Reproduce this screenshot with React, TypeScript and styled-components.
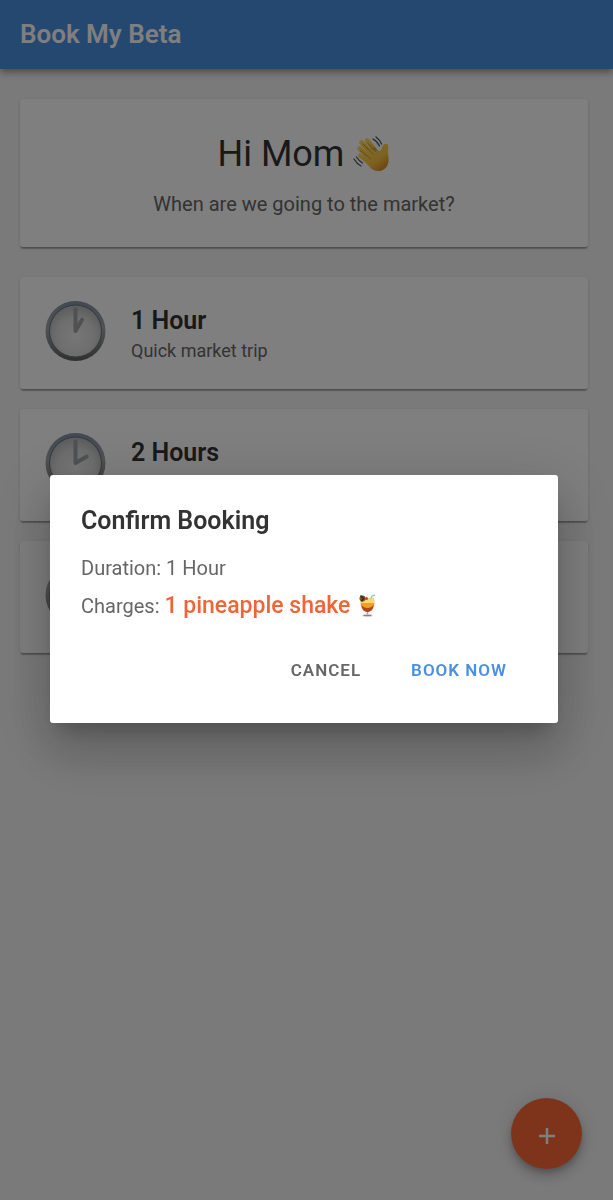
import React from "react";
import styled, { createGlobalStyle } from "styled-components";

const GlobalStyle = createGlobalStyle`
  * { box-sizing: border-box; }
  body {
    margin: 0;
    background: #f5f5f5;
    color: #333333;
    font-family: Roboto, "Liberation Sans", sans-serif;
  }
  h1, h2, h3, p, ul { margin: 0; padding: 0; }
`;

const Header = styled.header`
  position: relative;
  display: flex;
  align-items: center;
  height: 69px;
  padding: 0 20px 2px;
  background: #4a90e2;
  color: #ffffff;
  box-shadow: 0 3px 5px -1px rgba(0, 0, 0, 0.2), 0 5px 6px rgba(0, 0, 0, 0.14), 0 1px 13px rgba(0, 0, 0, 0.12);
`;

const Brand = styled.h1`
  font-size: 26px;
  line-height: 30px;
  font-weight: 600;
`;

const Main = styled.main`
  display: flex;
  flex-direction: column;
  gap: 30px;
  padding: 30px 25px 30px 20px;
`;

const Card = styled.section`
  background: #ffffff;
  border-radius: 3px;
  box-shadow: 0 3px 1px -1px rgba(0, 0, 0, 0.2), 0 1px 1px rgba(0, 0, 0, 0.14), 0 1px 4px rgba(0, 0, 0, 0.12);
`;

const Welcome = styled(Card)`
  display: flex;
  flex-direction: column;
  align-items: center;
  gap: 10px;
  min-height: 148px;
  padding: 30px 30px 28px;
`;

const Greeting = styled.h2`
  display: flex;
  align-items: center;
  gap: 9px;
  font-size: 36px;
  line-height: 50px;
  font-weight: 400;
`;

const Question = styled.p`
  color: #666666;
  font-size: 20px;
  line-height: 30px;
`;

const Options = styled.ul`
  display: flex;
  flex-direction: column;
  gap: 20px;
  list-style: none;
`;

const Option = styled(Card).attrs({ as: "li" })`
  display: flex;
  align-items: center;
  gap: 25px;
  min-height: 112px;
  padding: 20px 25px 24px;
`;

const OptionText = styled.div`
  padding-top: 2px;
`;

const OptionTitle = styled.h3`
  min-height: 36px;
  font-size: 25px;
  line-height: 36px;
  font-weight: 600;
`;

const OptionNote = styled.p`
  min-height: 23px;
  color: #666666;
  font-size: 18px;
  line-height: 23px;
`;

const AddButton = styled.button`
  position: fixed;
  right: 31px;
  bottom: 31px;
  display: grid;
  place-items: center;
  width: 71px;
  height: 71px;
  padding: 5px 0 0;
  border: 0;
  border-radius: 50%;
  background: #fb6836;
  color: #ffffff;
  box-shadow: 0 4px 6px -1px rgba(0, 0, 0, 0.2), 0 8px 13px rgba(0, 0, 0, 0.14), 0 1px 23px rgba(0, 0, 0, 0.12);
`;

const Overlay = styled.div`
  position: fixed;
  inset: 0;
  display: flex;
  align-items: center;
  padding: 0 55px 2px 50px;
  background: rgba(0, 0, 0, 0.5);
`;

const Dialog = styled.div`
  flex: 1;
  padding: 30px 31px;
  border-radius: 3px;
  background: #ffffff;
  box-shadow: 0 14px 19px -9px rgba(0, 0, 0, 0.2), 0 31px 48px 4px rgba(0, 0, 0, 0.14),
    0 11px 59px 10px rgba(0, 0, 0, 0.12);
`;

const DialogTitle = styled.h2`
  margin-bottom: 12px;
  font-size: 25px;
  line-height: 32px;
  font-weight: 600;
`;

const DialogLine = styled.p`
  display: flex;
  align-items: center;
  color: #666666;
  font-size: 20px;
  line-height: 38px;
  white-space: pre;
`;

const Price = styled.strong`
  display: flex;
  align-items: center;
  color: #ee6538;
  font-size: 23px;
  font-weight: 500;
`;

const Actions = styled.div`
  display: flex;
  justify-content: flex-end;
  gap: 10px;
  margin-top: 22px;
`;

const Action = styled.button<{ $primary?: boolean }>`
  height: 46px;
  padding: 0 20px;
  border: 0;
  background: transparent;
  color: ${(p) => (p.$primary ? "#4a90e2" : "#666666")};
  font-family: inherit;
  font-size: 17px;
  font-weight: 600;
  letter-spacing: 1px;
  text-transform: uppercase;
`;

function Clock({ hour }: { hour: number }) {
  const angle = (hour * Math.PI) / 6;
  const x = 30.5 + 13 * Math.sin(angle);
  const y = 31 - 13 * Math.cos(angle);
  return (
    <svg width="61" height="62" viewBox="0 0 61 62" aria-hidden="true">
      <defs>
        <linearGradient id={`rim${hour}`} x1="0" y1="0" x2="0" y2="1">
          <stop offset="0" stopColor="#8593a8" />
          <stop offset=".45" stopColor="#a2a4a8" />
          <stop offset="1" stopColor="#606060" />
        </linearGradient>
        <radialGradient id={`face${hour}`} cx=".5" cy=".6" r=".6">
          <stop offset="0" stopColor="#eeeeee" />
          <stop offset=".6" stopColor="#dcdcdc" />
          <stop offset="1" stopColor="#b4b6b8" />
        </radialGradient>
      </defs>
      <circle cx="30.5" cy="31" r="30" fill={`url(#rim${hour})`} />
      <circle cx="30.5" cy="31" r="26" fill={`url(#face${hour})`} stroke="#66707e" strokeWidth="1" />
      <path
        d={`M30.5 9.500V31L${x} ${y}`}
        fill="none"
        stroke="#a0a2a4"
        strokeWidth="4"
        strokeLinecap="round"
        strokeLinejoin="round"
      />
    </svg>
  );
}

function Wave() {
  return (
    <svg width="37" height="37" viewBox="0 0 37 37" role="img" aria-label="Waving hand">
      <defs>
        <linearGradient id="skin" x1="0" y1="0" x2=".7" y2="1">
          <stop offset="0" stopColor="#ffd95e" />
          <stop offset=".65" stopColor="#fbc640" />
          <stop offset="1" stopColor="#d88d20" />
        </linearGradient>
      </defs>
      <g fill="none" stroke="url(#skin)" strokeLinecap="round">
        <path d="M14 4.500L23 16" strokeWidth="4.600" />
        <path d="M8.500 6.500L20 19" strokeWidth="4.800" />
        <path d="M6.500 12.500L18 23" strokeWidth="4.600" />
        <path d="M7 19.500L17 27" strokeWidth="4.200" />
      </g>
      <path
        d="M15 13L25 14.500C27.500 15.500 28.500 14 29 11.500C29.500 8.500 33 6.500 34.800 8.500C36.200 10.500 34.700 13 35 17C35.300 21 36.500 24.500 34.500 29C31 36.500 22 37 16.500 31L11 24Z"
        fill="url(#skin)"
      />
      <path
        d="M10 8L20 18M7.500 14.500L18 23M14.500 7L23 16"
        fill="none"
        stroke="#c98a24"
        strokeWidth=".8"
        strokeLinecap="round"
      />
      <path
        d="M20 3Q24 5 26.500 10M23 1Q27 4 28.500 8M1 23Q4 28 8 30M3.500 21Q6 25 9.500 27"
        fill="none"
        stroke="#4d5258"
        strokeWidth="1.300"
        strokeLinecap="round"
      />
    </svg>
  );
}

function Shake() {
  return (
    <svg width="24" height="24" viewBox="0 0 24 24" role="img" aria-label="Tropical drink">
      <path d="M13 9L16 2L19 1" fill="none" stroke="#8fcbd8" strokeWidth="1.500" />
      <path d="M5 4.500H18C19 10 18.500 17 11.500 18C4.500 17 4 10 5 4.500Z" fill="#efa126" />
      <path d="M5 4.500H18V9H5Z" fill="#f4d875" />
      <path d="M5.500 11C8 15 15 15 17.500 11C17 16 14.500 18 11.500 18S6 16 5.500 11Z" fill="#b4471f" />
      <circle cx="6.500" cy="4.500" r="3" fill="#73572b" />
      <path d="M4.500 1.500L7.500 4.500L5.500 7.500" fill="none" stroke="#382b21" strokeWidth="1.500" />
      <circle cx="10.500" cy="4.500" r="1.500" fill="#d83b29" />
      <path d="M11.500 18V21" stroke="#b9a49a" strokeWidth="1.500" />
      <ellipse cx="11.500" cy="21.500" rx="5" ry="1.200" fill="#c8b9b1" />
      <path d="M8 21.500H15" stroke="#a5543e" strokeWidth=".7" />
    </svg>
  );
}

const durations = [
  { hour: 1, title: "1 Hour", note: "Quick market trip" },
  { hour: 2, title: "2 Hours" },
  { hour: 3 },
];

export default function App() {
  return (
    <>
      <GlobalStyle />
      <Header>
        <Brand>Book My Beta</Brand>
      </Header>
      <Main>
        <Welcome>
          <Greeting>
            Hi Mom <Wave />
          </Greeting>
          <Question>When are we going to the market?</Question>
        </Welcome>
        <Options>
          {durations.map(({ hour, title, note }) => (
            <Option key={hour}>
              <Clock hour={hour} />
              <OptionText>
                <OptionTitle>{title}</OptionTitle>
                <OptionNote>{note}</OptionNote>
              </OptionText>
            </Option>
          ))}
        </Options>
      </Main>
      <AddButton type="button" aria-label="Add booking">
        <svg width="16" height="16" viewBox="0 0 16 16" aria-hidden="true">
          <path d="M8 0V16M0 8H16" stroke="currentColor" strokeWidth="2.500" />
        </svg>
      </AddButton>
      <Overlay>
        <Dialog role="dialog" aria-modal="true" aria-labelledby="confirm-title">
          <DialogTitle id="confirm-title">Confirm Booking</DialogTitle>
          <DialogLine>Duration: 1 Hour</DialogLine>
          <DialogLine>
            {"Charges: "}
            <Price>
              1 pineapple shake <Shake />
            </Price>
          </DialogLine>
          <Actions>
            <Action type="button">Cancel</Action>
            <Action type="button" $primary>
              Book Now
            </Action>
          </Actions>
        </Dialog>
      </Overlay>
    </>
  );
}
